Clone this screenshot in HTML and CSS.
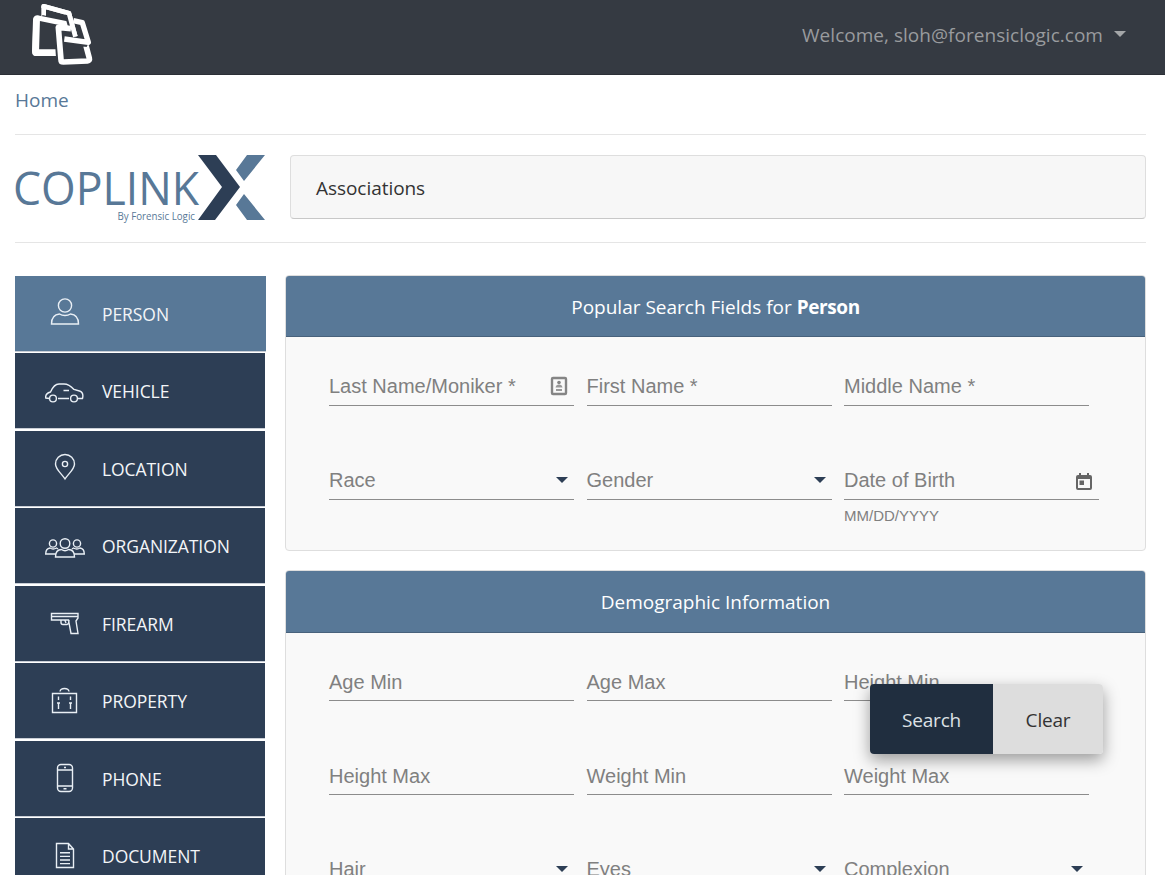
FILE: index.html
```html
<!DOCTYPE html>
<html lang="en">
<head>
<meta charset="utf-8">
<title>COPLINK X</title>
<link rel="stylesheet" href="styles.css">
</head>
<body>
<header class="topbar">
  <svg class="app-logo" viewBox="90 6 192 192" fill="none" stroke="#fff" stroke-linejoin="round">
    <path d="M131 49V19L207 40 226 110" stroke-width="14"/>
    <path class="gap" d="M125 55 210 74" stroke-width="20"/>
    <path d="M208 73 114 54Q107 53 107 60L104 154Q104 160 110 160H174" stroke-width="16"/>
    <path d="M110 56 107 158H172" stroke-width="20"/>
    <path class="gap" d="M202 40 222 110" stroke-width="18"/>
    <path d="M131 24V19L207 40 226 110" stroke-width="14"/>
    <path class="gap" d="M174 80 181 187" stroke-width="24"/>
    <path d="M213 86 175 82 183 179Q183 186 190 186L262 183Q270 182 268 175L258 137" stroke-width="17"/>
    <path class="gap" d="M193 120 262 131" stroke-width="21"/>
    <path d="M220 62 247 68 265 127 193 117" stroke-width="16"/>
  </svg>
  <button class="user">Welcome, sloh@forensiclogic.com<i class="caret"></i></button>
</header>
<nav class="crumbs"><a>Home</a></nav>
<section class="brand-row">
  <svg class="brand" width="251" height="70" viewBox="0 0 251 70">
    <text class="brand-name" x="-2" y="49.500" textLength="186" lengthAdjust="spacingAndGlyphs">COPLINK</text>
    <text class="brand-by" x="102.500" y="65" textLength="77.500" lengthAdjust="spacingAndGlyphs">By Forensic Logic</text>
    <path fill="#2d3e55" d="M183 0H201L225 32 200 65H183L207 32Z"/>
    <path fill="#587897" d="M232 0H250L229 26 221 15ZM229 39 250 65H232L221 50Z"/>
  </svg>
  <div class="assoc">Associations</div>
</section>
<div class="columns">
  <aside class="menu">
    <a class="item active"><svg viewBox="0 -.500 40 40"><circle cx="20" cy="12" r="6.6"/><path d="M6.5 30.5C6.5 24 9.500 21 14.500 20.500 17.500 22.500 22.500 22.500 25.500 20.500 30.500 21 33.500 24 33.500 30.500Z"/></svg>PERSON</a>
    <a class="item"><svg viewBox="0 -1.500 40 40"><circle cx="8" cy="26" r="3.400"/><circle cx="29" cy="26" r="3.400"/><path d="M13 26H24M32.500 26H37.500Q39 20 34.500 18.500L29 17Q24 11.500 19 11.500H14Q9 11.500 5.500 19.500 0 21 .800 25.500L4.500 26M18.500 18H24"/></svg>VEHICLE</a>
    <a class="item"><svg viewBox="0 1 40 40"><circle cx="20" cy="17" r="2.600"/><path d="M20 32C17 27 10.500 22.500 10.500 17A9.500 9.500 0 0 1 29.500 17C29.500 22.500 23 27 20 32Z"/></svg>LOCATION</a>
    <a class="item"><svg viewBox="0 -1.500 40 40"><circle cx="20" cy="16" r="4.800"/><circle cx="8" cy="16" r="3.600"/><circle cx="32" cy="16" r="3.600"/><path d="M10.500 29.500Q10.500 22 16.500 22 20 24.500 23.500 22 29.500 22 29.500 29.500ZM10.500 26.500H.700Q.700 21 5 20.500 8 22.500 11.500 20.500L13 21.500M29.500 26.500H39.300Q39.300 21 35 20.500 32 22.500 28.500 20.500L27 21.500"/></svg>ORGANIZATION</a>
    <a class="item"><svg viewBox="0 0 40 40"><path d="M6.500 10.500H33L33 15 31 18 33 30.500H26L24 20 23.500 17H6.500ZM6.500 13.500H33M16 17V19.500Q16 21.500 18 21.500H22Q24 21 24 17M20 17.500 21 20"/></svg>FIREARM</a>
    <a class="item"><svg viewBox="0 0 40 40"><path d="M7.500 12.500H31.500V31.500H7.500ZM15 10.500Q15.500 7.500 19.500 7.500T24 10.500M13.500 15.500V19M25.500 15.500V19M12 22H15M24 22H27M13.500 22V28M25.500 22V28"/></svg>PROPERTY</a>
    <a class="item"><svg viewBox="0 0 40 40"><rect x="12.500" y="6.500" width="15" height="27" rx="3.500"/><path d="M12.500 12H27.500M12.500 28H27.500M19 9.500H21M18.500 30.800H21.500"/></svg>PHONE</a>
    <a class="item"><svg viewBox="0 0 40 40"><path d="M11.500 7.500H23.500L28.500 13V31.500H11.500ZM23.500 7.500V13H28.500M15 16.800H25M15 20.400H25M15 24H25M15 27.600H25"/></svg>DOCUMENT</a>
  </aside>
  <main class="cards">
    <section class="card">
      <h2>Popular Search Fields for <b>Person</b></h2>
      <div class="fields">
        <label class="field">Last Name/Moniker *
          <svg class="contact" width="18" height="20" viewBox="0 0 18 20"><rect x="2" y="2" width="14" height="16" rx="1" fill="none" stroke="#858585" stroke-width="2.400"/><circle cx="9" cy="6.500" r="1.800" fill="#858585"/><path d="M5.500 11.500Q6 8.500 9 8.500T12.500 11.500ZM6 13H12V15H6Z" fill="#999"/></svg></label>
        <label class="field">First Name *</label>
        <label class="field">Middle Name *</label>
        <label class="field">Race<i class="arrow"></i></label>
        <label class="field">Gender<i class="arrow"></i></label>
        <div class="date"><label class="field">Date of Birth
          <svg class="calendar" width="18" height="18" viewBox="0 0 18 18"><path fill="#666" fill-rule="evenodd" d="M4 0H6V2H12V0H14V2H15Q17 2 17 4V15Q17 17 15 17H3Q1 17 1 15V4Q1 2 3 2H4ZM3 6V15H15V6ZM4.500 7.500H9V12H4.500Z"/></svg></label>
          <small>MM/DD/YYYY</small></div>
      </div>
    </section>
    <section class="card second">
      <h2>Demographic Information</h2>
      <div class="fields">
        <label class="field">Age Min</label>
        <label class="field">Age Max</label>
        <label class="field">Height Min</label>
        <label class="field">Height Max</label>
        <label class="field">Weight Min</label>
        <label class="field">Weight Max</label>
        <label class="field">Hair<i class="arrow"></i></label>
        <label class="field">Eyes<i class="arrow"></i></label>
        <label class="field">Complexion<i class="arrow"></i></label>
      </div>
    </section>
  </main>
</div>
<div class="actions"><button class="search">Search</button><button class="clear">Clear</button></div>
</body>
</html>
```
FILE: styles.css
```css
* { box-sizing: border-box; }
body {
  margin: 0;
  height: 875px;
  overflow: hidden;
  background: #fff;
  font-family: "Open Sans", "Noto Sans", sans-serif;
  font-size: 19px;
}
button { font: inherit; border: 0; padding: 0; }
.topbar {
  height: 75px;
  padding: 0 39px 0 30px;
  display: flex;
  justify-content: space-between;
  background: #353a42;
  border-bottom: 1px solid #2b2f36;
}
.app-logo { width: 64px; height: 64px; margin-top: 2px; }
.app-logo .gap { stroke: #353a42; }
.user {
  height: 70px;
  display: flex;
  align-items: center;
  background: none;
  color: #999b9e;
  letter-spacing: .03px;
}
.caret {
  margin: -3px 0 0 11px;
  border: 6px solid transparent;
  border-top-color: #a4a6a8;
  border-bottom: 0;
}
.crumbs {
  height: 60px;
  margin: 0 19px 0 15px;
  padding-top: 12px;
  border-bottom: 1px solid #e5e5e5;
  color: #587897;
  line-height: 26px;
}
.brand-row {
  height: 108px;
  margin: 0 19px 0 15px;
  padding-top: 20px;
  display: flex;
  gap: 24px;
  border-bottom: 1px solid #e5e5e5;
}
.brand { flex: none; overflow: visible; }
.brand-name { font-size: 45px; fill: #587897; }
.brand-by { font-size: 10px; fill: #587897; }
.assoc {
  flex: 1;
  height: 64px;
  padding: 2px 25px 0;
  display: flex;
  align-items: center;
  border: 1px solid #dedede;
  border-bottom-color: #c8c8c8;
  border-radius: 4px;
  background: #f7f7f7;
  color: #333;
  letter-spacing: -.05px;
}
.columns {
  display: flex;
  align-items: flex-start;
  gap: 19px;
  padding: 32px 19px 0 15px;
}
.menu { width: 251px; padding-top: .5px; flex: none; }
.item {
  width: 250px;
  height: 76px;
  margin-bottom: 1.5px;
  padding: 1px 0 0 30px;
  display: flex;
  align-items: center;
  gap: 17px;
  background: #2d3e55;
  border-bottom: 1px solid #c9ced6;
  color: #f3f5f8;
  font-size: 17.5px;
  letter-spacing: -.07px;
}
.item.active { width: 251px; background: #587897; }
.item svg {
  width: 40px;
  height: 40px;
  margin-top: -1px;
  fill: none;
  stroke: #e9eff5;
  stroke-width: 1.4;
}
.cards { flex: 1; min-width: 0; }
.card {
  height: 276px;
  margin-bottom: 19px;
  border: 1px solid #dedede;
  border-radius: 4px;
  background: #f9f9f9;
  overflow: hidden;
}
.card.second { height: 420px; }
.card h2 {
  height: 61px;
  margin: 0;
  border-bottom: 1px solid #48627c;
  background: #587897;
  color: #fff;
  font-size: 19px;
  font-weight: 400;
  line-height: 63px;
  text-align: center;
}
.card h2 b { font-weight: 700; letter-spacing: -.4px; }
.second h2 { height: 62px; }
.fields {
  padding-left: 43px;
  display: grid;
  grid-template-columns: repeat(3, 245px);
  column-gap: 12.5px;
  row-gap: 25px;
  font-family: "Liberation Sans", Arial, sans-serif;
  font-size: 20px;
  color: #808080;
}
.field {
  height: 69px;
  padding: 0 6px 7px 0;
  display: flex;
  align-items: flex-end;
  justify-content: space-between;
  line-height: 24px;
  border-bottom: 1px solid #8c8c8c;
}
.second .field { height: 68px; padding-bottom: 6px; }
.second .field:nth-child(n+7) { padding-bottom: 7px; }
.second .fields { row-gap: 26px; }
.arrow {
  margin-bottom: 9px;
  border: 6px solid transparent;
  border-top-color: #2d3e55;
  border-bottom: 0;
}
.contact { margin-bottom: 2px; }
.date { width: 255px; height: 94px; }
.calendar { margin-bottom: 1px; }
.date small {
  display: block;
  margin-top: 6px;
  font-size: 15px;
  line-height: 20px;
}
.actions {
  position: fixed;
  left: 870px;
  top: 684px;
  display: flex;
  border-radius: 4px;
  overflow: hidden;
  box-shadow: 0 6px 16px rgba(0, 0, 0, .38);
}
.actions button { height: 70px; padding-top: 2px; letter-spacing: -.2px; }
.search { width: 123px; background: #202e3f; color: #dde1e5; }
.clear { width: 110px; background: #ddd; color: #333; }
```
